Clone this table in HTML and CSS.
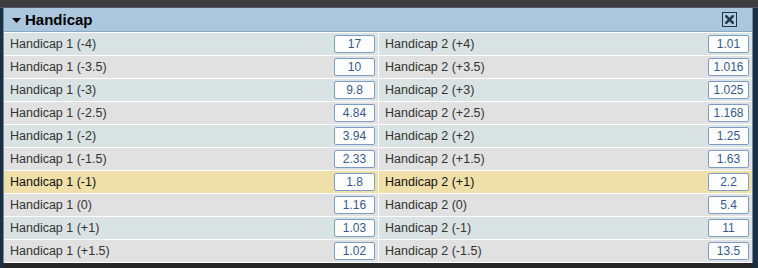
FILE: index.html
```html
<!DOCTYPE html>
<html>
<head>
<meta charset="utf-8">
<link rel="stylesheet" href="styles.css">
</head>
<body>
<div class="topbar"></div>
<div class="panel">
  <div class="header">
    <svg class="caret" width="9" height="5" viewBox="0 0 9 5"><polygon points="0,0 9,0 4.5,5" fill="#000"/></svg>
    <span class="title">Handicap</span>
    <span class="close"><svg width="9" height="9" viewBox="0 0 9 9"><path d="M1.3 1.3 L7.7 7.7 M7.7 1.3 L1.3 7.7" stroke="#24384c" stroke-width="2.6" stroke-linecap="square"/></svg></span>
  </div>
  <div class="rows">
    <div class="row odd"><div class="cell"><span>Handicap 1 (-4)</span><span class="odds">17</span></div><div class="cell"><span>Handicap 2 (+4)</span><span class="odds">1.01</span></div></div>
    <div class="row even"><div class="cell"><span>Handicap 1 (-3.5)</span><span class="odds">10</span></div><div class="cell"><span>Handicap 2 (+3.5)</span><span class="odds">1.016</span></div></div>
    <div class="row odd"><div class="cell"><span>Handicap 1 (-3)</span><span class="odds">9.8</span></div><div class="cell"><span>Handicap 2 (+3)</span><span class="odds">1.025</span></div></div>
    <div class="row even"><div class="cell"><span>Handicap 1 (-2.5)</span><span class="odds">4.84</span></div><div class="cell"><span>Handicap 2 (+2.5)</span><span class="odds">1.168</span></div></div>
    <div class="row odd"><div class="cell"><span>Handicap 1 (-2)</span><span class="odds">3.94</span></div><div class="cell"><span>Handicap 2 (+2)</span><span class="odds">1.25</span></div></div>
    <div class="row even"><div class="cell"><span>Handicap 1 (-1.5)</span><span class="odds">2.33</span></div><div class="cell"><span>Handicap 2 (+1.5)</span><span class="odds">1.63</span></div></div>
    <div class="row hl"><div class="cell"><span>Handicap 1 (-1)</span><span class="odds">1.8</span></div><div class="cell"><span>Handicap 2 (+1)</span><span class="odds">2.2</span></div></div>
    <div class="row even"><div class="cell"><span>Handicap 1 (0)</span><span class="odds">1.16</span></div><div class="cell"><span>Handicap 2 (0)</span><span class="odds">5.4</span></div></div>
    <div class="row odd"><div class="cell"><span>Handicap 1 (+1)</span><span class="odds">1.03</span></div><div class="cell"><span>Handicap 2 (-1)</span><span class="odds">11</span></div></div>
    <div class="row even"><div class="cell"><span>Handicap 1 (+1.5)</span><span class="odds">1.02</span></div><div class="cell"><span>Handicap 2 (-1.5)</span><span class="odds">13.5</span></div></div>
  </div>
</div>
<div class="bottombar"></div>
</body>
</html>
```
FILE: styles.css
```css
html, body {
  margin: 0;
  padding: 0;
}
body {
  width: 758px;
  height: 268px;
  overflow: hidden;
  background: #1c2e42;
  font-family: "Liberation Sans", Arial, sans-serif;
}
.topbar {
  height: 7px;
  background: #3d3d3d;
  border-bottom: 1px solid #4f5a66;
}
.panel {
  margin-left: 3px;
  width: 748px;
  border-left: 1px solid #6f8aa5;
  border-right: 1px solid #6f8aa5;
}
.header {
  height: 23px;
  background: #abc7dd;
  border-bottom: 1px solid #86a7c5;
  display: flex;
  align-items: center;
  padding-left: 8px;
  padding-right: 15px;
}
.caret {
  display: block;
  margin-right: 4px;
  margin-top: 1px;
}
.title {
  font-weight: bold;
  font-size: 15px;
  color: #000;
  flex: 1;
}
.close {
  width: 13px;
  height: 13px;
  border: 1px solid #22364a;
  background: #b3cbe0;
  display: flex;
  align-items: center;
  justify-content: center;
}
.close svg {
  display: block;
}
.rows {
  border-top: 1px solid #ffffff;
  background: #ffffff;
}
.row {
  display: grid;
  grid-template-columns: 374px 373px;
  column-gap: 1px;
  border-bottom: 1px solid #ffffff;
}
.cell {
  height: 22px;
  display: flex;
  align-items: center;
  justify-content: space-between;
  padding-left: 6px;
  padding-right: 3px;
  font-size: 12.5px;
  color: #333333;
}
.odd .cell {
  background: #dae3e3;
}
.even .cell {
  background: #e1e1e1;
}
.hl .cell {
  background: #eee0a8;
  color: #111111;
}
.odds {
  box-sizing: border-box;
  width: 41px;
  height: 18px;
  border: 1px solid #7d9cc3;
  border-radius: 2px;
  background: #ffffff;
  color: #35598c;
  font-size: 12px;
  display: flex;
  align-items: center;
  justify-content: center;
}
.bottombar {
  margin-left: 4px;
  width: 749px;
  height: 5px;
  background: #262626;
}
```
